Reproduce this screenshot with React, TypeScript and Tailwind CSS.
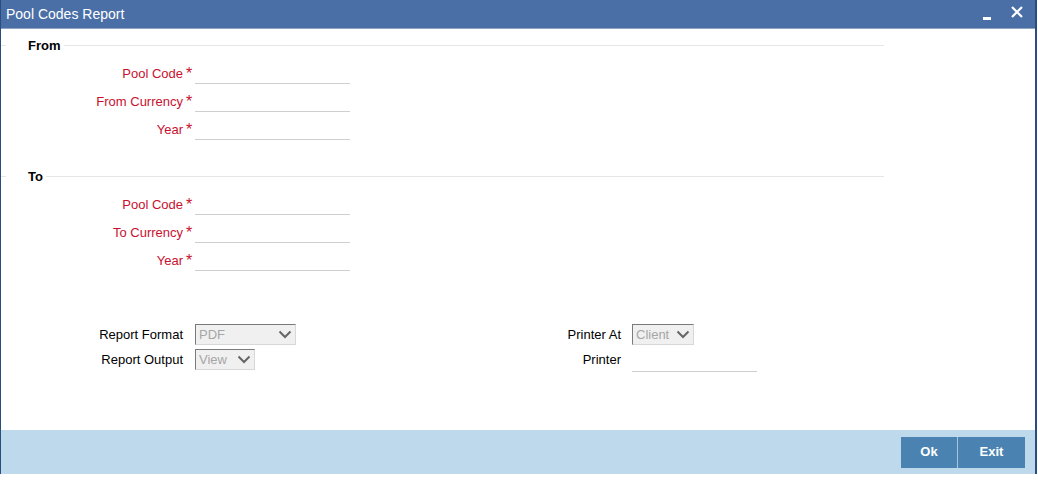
import React from 'react'

const font = { fontFamily: '"Liberation Sans", Arial, sans-serif' }

function Legend({ text }: { text: string }) {
  return (
    <div className="flex items-center h-[16px] w-[883px]">
      <div className="w-[5px] border-t border-[#e6e6e6]" />
      <div className="ml-[22px] text-[13px] font-bold text-black leading-none">{text}</div>
      <div className="ml-[3px] flex-1 border-t border-[#e6e6e6]" />
    </div>
  )
}

function Field({ label }: { label: string }) {
  return (
    <div className="flex items-center h-[28px]">
      <div className="w-[182px] text-right text-[13px] text-[#c8102e] leading-none">{label}</div>
      <div className="w-[12px] pl-[3px] text-[16px] text-[#c8102e] leading-none self-start pt-[7px]">*</div>
      <div className="w-[155px] h-[22px] border-b border-[#cfcfcf]" />
    </div>
  )
}

function Select({ value, width }: { value: string; width: string }) {
  return (
    <div
      className={`${width} h-[21px] flex items-center justify-between bg-[#f0f0f0] border border-t-[#7a7a7a] border-l-[#7a7a7a] border-r-[#d8d8d8] border-b-[#d8d8d8] pl-[3px] pr-[3px]`}
    >
      <span className="text-[13px] text-[#a6a6a6] leading-none">{value}</span>
      <svg width="14" height="9" viewBox="0 0 14 9">
        <path d="M1.5 1.5 L7 7 L12.5 1.5" fill="none" stroke="#666" strokeWidth="2" />
      </svg>
    </div>
  )
}

export default function App() {
  return (
    <div className="w-[1038px] h-[483px] bg-white" style={font}>
      <div className="w-[1037px] h-[474px] flex flex-col border-l border-r-2 border-[#2b4c7e]">
        {/* title bar */}
        <div className="h-[29px] flex items-center justify-between bg-[#4a6fa6] border-b border-[#8ea3bd]">
          <span className="ml-[5px] text-[14px] text-white leading-none">Pool Codes Report</span>
          <div className="flex items-center mr-[12px]">
            <div className="w-[8px] h-[3px] bg-white mt-[8px]" />
            <svg className="ml-[20px] mb-[4px]" width="12" height="12" viewBox="0 0 12 12">
              <path d="M1 1 L11 11 M11 1 L1 11" stroke="white" strokeWidth="2.2" />
            </svg>
          </div>
        </div>

        {/* body */}
        <div className="flex-1 text-[13px] text-black">
          <div className="mt-[8px]">
            <Legend text="From" />
          </div>
          <div className="mt-[6px]">
            <Field label="Pool Code" />
            <Field label="From Currency" />
            <Field label="Year" />
          </div>

          <div className="mt-[25px]">
            <Legend text="To" />
          </div>
          <div className="mt-[6px]">
            <Field label="Pool Code" />
            <Field label="To Currency" />
            <Field label="Year" />
          </div>

          <div className="mt-[48px]">
            <div className="flex items-center h-[25px]">
              <div className="w-[182px] text-right leading-none">Report Format</div>
              <div className="ml-[12px] w-[250px]">
                <Select value="PDF" width="w-[101px]" />
              </div>
              <div className="w-[176px] text-right leading-none">Printer At</div>
              <div className="ml-[11px]">
                <Select value="Client" width="w-[62px]" />
              </div>
            </div>
            <div className="flex items-center h-[25px]">
              <div className="w-[182px] text-right leading-none">Report Output</div>
              <div className="ml-[12px] w-[250px]">
                <Select value="View" width="w-[60px]" />
              </div>
              <div className="w-[176px] text-right leading-none">Printer</div>
              <div className="ml-[11px] w-[125px] h-[24px] border-b border-[#cfcfcf]" />
            </div>
          </div>
        </div>

        {/* footer */}
        <div className="h-[44px] bg-[#bed9ec] flex items-center justify-end pr-[10px]">
          <button className="w-[57px] h-[31px] bg-[#4a83b1] text-white text-[13px] font-bold border-r border-[#a9c6de]">
            Ok
          </button>
          <button className="w-[67px] h-[31px] bg-[#4a83b1] text-white text-[13px] font-bold">
            Exit
          </button>
        </div>
      </div>
    </div>
  )
}
